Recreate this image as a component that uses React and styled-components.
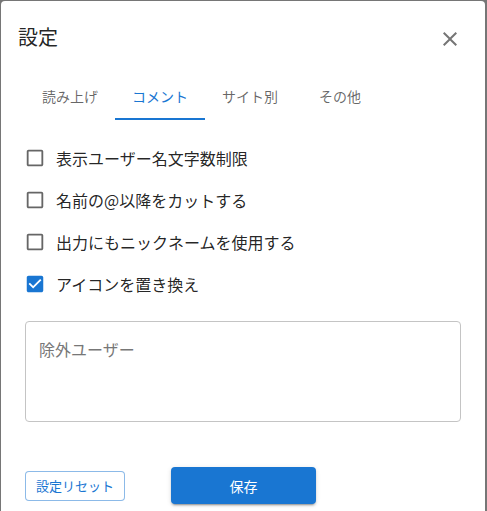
import React, { useState } from "react";
import styled, { createGlobalStyle } from "styled-components";

const GlobalStyle = createGlobalStyle`
  html, body {
    margin: 0;
    padding: 0;
    background: #767676;
    height: 100%;
    overflow: hidden;
  }
  body {
    font-family: "Noto Sans CJK JP", "Noto Sans", sans-serif;
  }
`;

const Dialog = styled.div`
  margin: 1px 0 0 1px;
  width: 484px;
  height: calc(100vh - 1px);
  overflow: hidden;
  background: #fff;
  border-radius: 4px 4px 0 0;
  box-sizing: border-box;
`;

const Header = styled.div`
  display: flex;
  align-items: center;
  justify-content: space-between;
  height: 71px;
  padding: 0 15px 0 17px;
  box-sizing: border-box;
`;

const Title = styled.h2`
  margin: 0;
  font-size: 20px;
  font-weight: 400;
  color: rgba(0, 0, 0, 0.87);
  line-height: 32px;
`;

const CloseButton = styled.button`
  width: 40px;
  height: 40px;
  margin-top: 4px;
  border: none;
  background: none;
  padding: 8px;
  cursor: pointer;
  color: #757575;
  display: flex;
  align-items: center;
  justify-content: center;
`;

const TabBar = styled.div`
  display: flex;
  padding-left: 24px;
  height: 48px;
`;

const Tab = styled.button`
  width: 90px;
  height: 48px;
  border: none;
  background: none;
  padding: 0;
  font-family: inherit;
  font-size: 14px;
  color: ${(p) => (p.$active ? "#1976d2" : "rgba(0,0,0,0.6)")};
  border-bottom: 2px solid ${(p) => (p.$active ? "#1976d2" : "transparent")};
  box-sizing: border-box;
  padding-top: 1px;
  cursor: pointer;
`;

const Content = styled.div`
  padding: 17px 24px 0 24px;
`;

const OptionList = styled.div`
  display: flex;
  flex-direction: column;
`;

const Option = styled.label`
  display: flex;
  align-items: center;
  height: 42px;
  margin-left: -11px;
  font-size: 16px;
  color: rgba(0, 0, 0, 0.87);
  cursor: pointer;
`;

const BoxWrap = styled.span`
  width: 42px;
  height: 42px;
  display: flex;
  align-items: center;
  justify-content: center;
  color: ${(p) => (p.$checked ? "#1976d2" : "#666")};
`;

const Field = styled.textarea`
  display: block;
  margin-top: 16px;
  width: 100%;
  height: 101px;
  box-sizing: border-box;
  border: 1px solid #c4c4c4;
  border-radius: 4px;
  padding: 16px 13px;
  font-family: inherit;
  font-size: 16px;
  line-height: 23px;
  resize: none;
  outline: none;
  color: rgba(0, 0, 0, 0.87);
  &::placeholder {
    color: #777;
  }
`;

const Actions = styled.div`
  display: flex;
  align-items: center;
  gap: 46px;
  margin-top: 45px;
`;

const ResetButton = styled.button`
  height: 30px;
  width: 100px;
  border: 1px solid rgba(25, 118, 210, 0.5);
  border-radius: 4px;
  background: #fff;
  color: #1976d2;
  font-family: inherit;
  font-size: 13px;
  padding: 0;
  cursor: pointer;
`;

const SaveButton = styled.button`
  height: 37px;
  width: 145px;
  border: none;
  border-radius: 4px;
  background: #1976d2;
  color: #fff;
  font-family: inherit;
  font-size: 14px;
  padding: 0;
  cursor: pointer;
  box-shadow: 0 3px 1px -2px rgba(0, 0, 0, 0.2), 0 2px 2px 0 rgba(0, 0, 0, 0.14),
    0 1px 5px 0 rgba(0, 0, 0, 0.12);
`;

const CloseIcon = () => (
  <svg width="24" height="24" viewBox="0 0 24 24" fill="currentColor">
    <path d="M19 6.41 17.59 5 12 10.59 6.41 5 5 6.41 10.59 12 5 17.59 6.41 19 12 13.41 17.59 19 19 17.59 13.41 12z" />
  </svg>
);

const BoxIcon = ({ checked }) => (
  <svg width="22" height="22" viewBox="0 0 24 24" fill="currentColor">
    {checked ? (
      <path d="M19 3H5c-1.11 0-2 .9-2 2v14c0 1.1.89 2 2 2h14c1.1 0 2-.9 2-2V5c0-1.1-.89-2-2-2zm-9 14l-5-5 1.41-1.41L10 14.17l7.59-7.59L19 8l-9 9z" />
    ) : (
      <path d="M19 5v14H5V5h14m0-2H5c-1.11 0-2 .9-2 2v14c0 1.1.89 2 2 2h14c1.1 0 2-.9 2-2V5c0-1.1-.9-2-2-2z" />
    )}
  </svg>
);

const tabs = ["読み上げ", "コメント", "サイト別", "その他"];

export default function App() {
  const [tab, setTab] = useState(1);
  const [opts, setOpts] = useState([
    { label: "表示ユーザー名文字数制限", checked: false },
    { label: "名前の@以降をカットする", checked: false },
    { label: "出力にもニックネームを使用する", checked: false },
    { label: "アイコンを置き換え", checked: true },
  ]);

  const toggle = (i) =>
    setOpts(opts.map((o, j) => (j === i ? { ...o, checked: !o.checked } : o)));

  return (
    <>
      <GlobalStyle />
      <Dialog>
        <Header>
          <Title>設定</Title>
          <CloseButton aria-label="close">
            <CloseIcon />
          </CloseButton>
        </Header>
        <TabBar>
          {tabs.map((t, i) => (
            <Tab key={t} $active={i === tab} onClick={() => setTab(i)}>
              {t}
            </Tab>
          ))}
        </TabBar>
        <Content>
          <OptionList>
            {opts.map((o, i) => (
              <Option key={o.label} onClick={() => toggle(i)}>
                <BoxWrap $checked={o.checked}>
                  <BoxIcon checked={o.checked} />
                </BoxWrap>
                {o.label}
              </Option>
            ))}
          </OptionList>
          <Field placeholder="除外ユーザー" />
          <Actions>
            <ResetButton>設定リセット</ResetButton>
            <SaveButton>保存</SaveButton>
          </Actions>
        </Content>
      </Dialog>
    </>
  );
}
